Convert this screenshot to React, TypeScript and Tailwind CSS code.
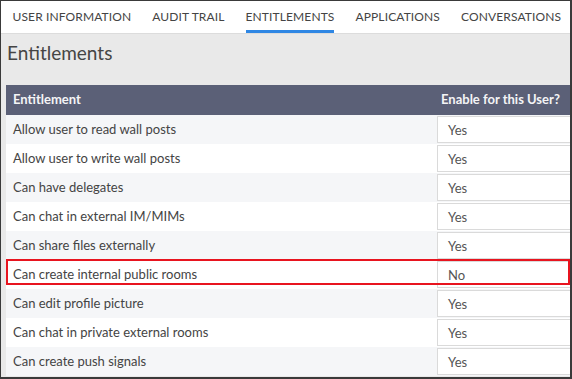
const TABS = ['User Information', 'Audit Trail', 'Entitlements', 'Applications', 'Conversations']

const ROWS: { label: string; value: string; flagged?: boolean }[] = [
  { label: 'Allow user to read wall posts', value: 'Yes' },
  { label: 'Allow user to write wall posts', value: 'Yes' },
  { label: 'Can have delegates', value: 'Yes' },
  { label: 'Can chat in external IM/MIMs', value: 'Yes' },
  { label: 'Can share files externally', value: 'Yes' },
  { label: 'Can create internal public rooms', value: 'No', flagged: true },
  { label: 'Can edit profile picture', value: 'Yes' },
  { label: 'Can chat in private external rooms', value: 'Yes' },
  { label: 'Can create push signals', value: 'Yes' },
]

export default function App() {
  return (
    <div
      className="h-[379px] w-[572px] overflow-hidden border-t border-l border-r-2 border-b-2 border-[#3a3a3a] bg-[#e9e9e9]"
      style={{ fontFamily: 'Lato, "Open Sans", sans-serif' }}
    >
      {/* tabs */}
      <div className="flex h-[33px] items-stretch border-b border-[#dcdcdc] bg-white pl-[1px]">
        {TABS.map((t) => {
          const active = t === 'Entitlements'
          return (
            <div
              key={t}
              className="relative flex shrink-0 items-center whitespace-nowrap px-[10.5px] text-[12px] uppercase tracking-[0.12px] text-[#444]"
            >
              {t}
              {active && <span className="absolute bottom-0 left-[10.5px] right-[10.5px] h-[3px] bg-[#2f87e4]" />}
            </div>
          )
        })}
      </div>

      <h2 className="px-[6px] pt-[7px] text-[19px] leading-[24px] text-[#454545]">Entitlements</h2>

      {/* table */}
      <div className="ml-[5px] mt-[20px] w-[580px]">
        <div className="flex h-[30px] items-center bg-[#5b6077] text-[13px] font-bold text-[#f4f4f6]">
          <div className="w-[431px] pl-[7px]">Entitlement</div>
          <div className="pl-[4px]">Enable for this User?</div>
        </div>
        {ROWS.map((r, i) => (
          <div
            key={r.label}
            className={`relative flex h-[29px] items-center text-[13px] text-[#444] ${i % 2 === 0 ? 'bg-[#f5f6f8]' : 'bg-white'}`}
          >
            <div className="w-[431px] pl-[7px]">{r.label}</div>
            <div className="flex h-[27px] flex-1 items-center border border-[#dadada] bg-white pl-[10px] pt-[3px] text-[#555]">
              {r.value}
            </div>
            {r.flagged && (
              <span className="pointer-events-none absolute top-[-1px] left-0 h-[26px] w-[564px] border-2 border-[#e8141f]" />
            )}
          </div>
        ))}
      </div>
    </div>
  )
}
